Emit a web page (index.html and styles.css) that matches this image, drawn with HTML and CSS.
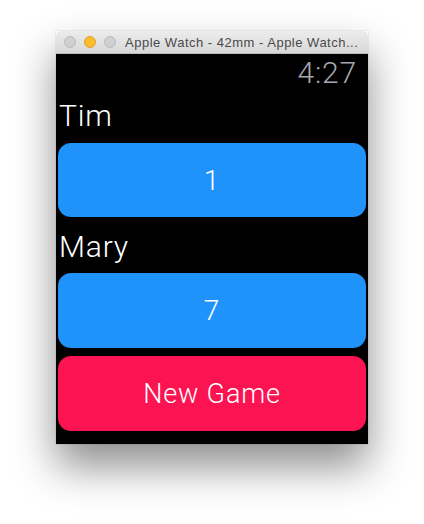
FILE: index.html
```html
<!DOCTYPE html>
<html>
<head>
<meta charset="utf-8">
<link rel="stylesheet" href="styles.css">
</head>
<body>
<div class="window">
  <div class="titlebar">
    <div class="lights">
      <span class="light grey"></span>
      <span class="light yellow"></span>
      <span class="light grey"></span>
    </div>
    <div class="title">Apple Watch - 42mm - Apple Watch...</div>
  </div>
  <div class="screen">
    <div class="time">4:27</div>
    <div class="name first">Tim</div>
    <div class="btn blue b1">1</div>
    <div class="name second">Mary</div>
    <div class="btn blue b2">7</div>
    <div class="btn red b3">New Game</div>
  </div>
</div>
</body>
</html>
```

FILE: styles.css
```css
html, body {
  margin: 0;
  padding: 0;
  background: #ffffff;
}
body {
  width: 424px;
  height: 524px;
  overflow: hidden;
}
.window {
  margin: 31px 0 0 56px;
  width: 312px;
  box-shadow: 0 22px 40px rgba(0, 0, 0, 0.45), 0 0 1px rgba(0,0,0,0.3);
}
.titlebar {
  height: 23px;
  box-sizing: border-box;
  background: linear-gradient(#ececec, #d8d8d8);
  border-radius: 5px 5px 0 0;
  border-bottom: 1px solid #b9b9b9;
  display: flex;
  align-items: center;
  font-family: "Liberation Sans", Arial, sans-serif;
}
.lights {
  display: flex;
  gap: 8px;
  margin-left: 8px;
}
.light {
  width: 12px;
  height: 12px;
  border-radius: 50%;
  box-sizing: border-box;
}
.light.grey {
  background: #d0d0d0;
  border: 1px solid #bcbcbc;
}
.light.yellow {
  background: #fbbc2e;
  border: 1px solid #e0a127;
}
.title {
  margin-left: 9px;
  font-size: 13px;
  letter-spacing: 0.5px;
  color: #4a4a4a;
  white-space: nowrap;
}
.screen {
  background: #000;
  height: 390px;
  box-sizing: border-box;
  padding: 1px 2px 13px 2px;
  font-family: Roboto, "Noto Sans", sans-serif;
  font-weight: 300;
  display: flex;
  flex-direction: column;
}
.time {
  line-height: 36px;
  font-size: 30px;
  color: #a6a6ae;
  text-align: right;
  padding-right: 9px;
  letter-spacing: 0.8px;
}
.name {
  line-height: 36px;
  font-size: 30px;
  color: #fff;
  padding-left: 1px;
  letter-spacing: 0.8px;
}
.name.first { margin-top: 7px; }
.name.second { margin-top: 12px; }
.btn {
  border-radius: 13px;
  display: flex;
  align-items: center;
  justify-content: center;
  color: #fff;
  font-size: 28px;
  letter-spacing: 0.8px;
}
.blue { background: #1f93fa; }
.red { background: #fc1352; }
.b1 { height: 74px; margin-top: 9px; }
.b2 { height: 75px; margin-top: 8px; }
.b3 { height: 75px; margin-top: 8px; font-size: 27px; }
```
